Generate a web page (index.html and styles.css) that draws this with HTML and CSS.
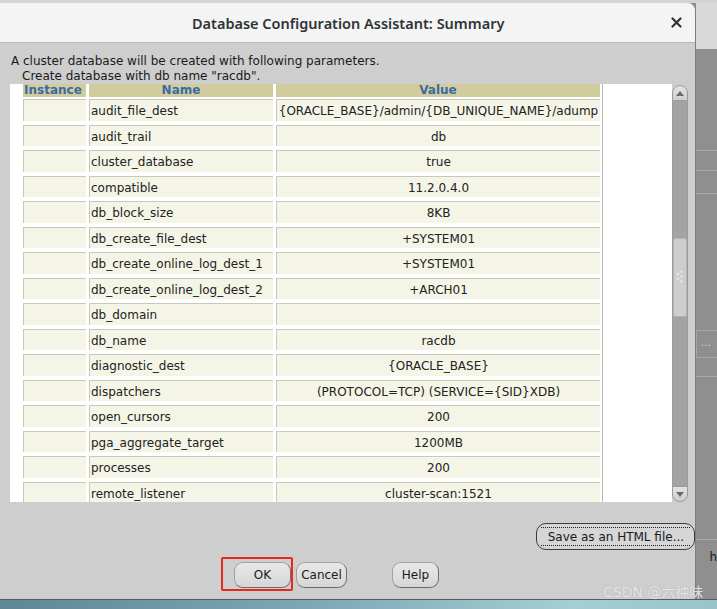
FILE: index.html
```html
<!DOCTYPE html>
<html>
<head>
<meta charset="utf-8">
<link rel="stylesheet" href="styles.css">
</head>
<body>
<div class="screen">
  <div class="topstrip"></div>
  <div class="main">
    <div class="dialog">
      <div class="titlebar">
        <span class="title">Database Configuration Assistant: Summary</span>
        <svg class="close" width="11" height="11" viewBox="0 0 11 11"><path d="M1.5 1.5 L9.5 9.5 M9.5 1.5 L1.5 9.5" stroke="#2e3436" stroke-width="2.2" stroke-linecap="round"/></svg>
      </div>
      <div class="content">
        <p class="msg">A cluster database will be created with following parameters.</p>
        <p class="msg indent">Create database with db name "racdb".</p>
        <div class="panel">
          <div class="tablearea">
            <div class="gridwrap">
              <div class="grid head">
                <div class="hcell left">Instance</div>
                <div class="hcell">Name</div>
                <div class="hcell">Value</div>
              </div>
              <div class="grid rows">
                <div class="cell"></div><div class="cell name">audit_file_dest</div><div class="cell val">{ORACLE_BASE}/admin/{DB_UNIQUE_NAME}/adump</div>
                <div class="cell"></div><div class="cell name">audit_trail</div><div class="cell val">db</div>
                <div class="cell"></div><div class="cell name">cluster_database</div><div class="cell val">true</div>
                <div class="cell"></div><div class="cell name">compatible</div><div class="cell val">11.2.0.4.0</div>
                <div class="cell"></div><div class="cell name">db_block_size</div><div class="cell val">8KB</div>
                <div class="cell"></div><div class="cell name">db_create_file_dest</div><div class="cell val">+SYSTEM01</div>
                <div class="cell"></div><div class="cell name">db_create_online_log_dest_1</div><div class="cell val">+SYSTEM01</div>
                <div class="cell"></div><div class="cell name">db_create_online_log_dest_2</div><div class="cell val">+ARCH01</div>
                <div class="cell"></div><div class="cell name">db_domain</div><div class="cell val"></div>
                <div class="cell"></div><div class="cell name">db_name</div><div class="cell val">racdb</div>
                <div class="cell"></div><div class="cell name">diagnostic_dest</div><div class="cell val">{ORACLE_BASE}</div>
                <div class="cell"></div><div class="cell name">dispatchers</div><div class="cell val">(PROTOCOL=TCP) (SERVICE={SID}XDB)</div>
                <div class="cell"></div><div class="cell name">open_cursors</div><div class="cell val">200</div>
                <div class="cell"></div><div class="cell name">pga_aggregate_target</div><div class="cell val">1200MB</div>
                <div class="cell"></div><div class="cell name">processes</div><div class="cell val">200</div>
                <div class="cell"></div><div class="cell name">remote_listener</div><div class="cell val">cluster-scan:1521</div>
              </div>
            </div>
          </div>
          <div class="scrollbar">
            <div class="sbtn up"><svg width="8" height="5" viewBox="0 0 8 5"><path d="M0 5 L4 0 L8 5 Z" fill="#6a6a6a"/></svg></div>
            <div class="track">
              <div class="thumb">
                <svg width="8" height="16" viewBox="0 0 8 16"><g fill="#f4f4f4"><circle cx="5.5" cy="1.5" r="0.9"/><circle cx="2" cy="4" r="0.9"/><circle cx="5.5" cy="6.5" r="0.9"/><circle cx="2" cy="9" r="0.9"/><circle cx="5.5" cy="11.5" r="0.9"/></g></svg>
              </div>
            </div>
            <div class="sbtn down"><svg width="8" height="5" viewBox="0 0 8 5"><path d="M0 0 L4 5 L8 0 Z" fill="#6a6a6a"/></svg></div>
          </div>
        </div>
        <div class="saverow">
          <div class="savebtn"><span class="focus">Save as an HTML file...</span></div>
        </div>
        <div class="buttonrow">
          <div class="mark"><div class="btn ok">OK</div></div>
          <div class="btn cancel">Cancel</div>
          <div class="btn help">Help</div>
        </div>
      </div>
    </div>
    <div class="side">
      <div class="side-top"></div>
      <div class="side-body">
        <div class="sline s1"></div>
        <div class="sline s2"></div>
        <div class="sline s3"></div>
        <div class="sbox">...</div>
        <div class="sline s4"></div>
        <div class="sline s5"></div>
        <div class="sh">h</div>
      </div>
    </div>
  </div>
  <div class="taskbar"></div>
  <div class="watermark">CSDN @六种味</div>
</div>
</body>
</html>
```
FILE: styles.css
```css
html, body {
  margin: 0;
  padding: 0;
}
body {
  width: 717px;
  height: 609px;
  overflow: hidden;
  font-family: "DejaVu Sans", sans-serif;
  background: #cecece;
}
.screen {
  position: relative;
  width: 717px;
  height: 609px;
  display: flex;
  flex-direction: column;
  background: #8e8e8e;
}
.topstrip {
  height: 3px;
  background: #d4d4d4;
}
.main {
  display: flex;
  height: 597px;
}
.dialog {
  width: 697px;
  border-right: 1px solid #7d7d7d;
  display: flex;
  flex-direction: column;
  background: #cecece;
  border-top-right-radius: 8px;
}
.titlebar {
  height: 39px;
  border-bottom: 1px solid #b9b9b9;
  background: #f4f4f4;
  border-top-right-radius: 8px;
  display: flex;
  align-items: center;
  justify-content: center;
  position: relative;
}
.title {
  font-family: "Noto Sans", sans-serif;
  font-size: 14.5px;
  font-weight: 600;
  color: #2e3436;
  padding-left: 1px;
}
.close {
  position: absolute;
  right: 13px;
  top: 14px;
}
.content {
  flex: 1;
  display: flex;
  flex-direction: column;
  padding-top: 11px;
}
.msg {
  margin: 0;
  font-size: 12px;
  line-height: 15px;
  color: #1a1a1a;
  padding-left: 11px;
  white-space: nowrap;
}
.msg.indent {
  padding-left: 22px;
}
.panel {
  display: flex;
  height: 418px;
  margin-left: 10px;
}
.tablearea {
  width: 649px;
  padding-left: 13px;
  background: #ffffff;
  overflow: hidden;
}
.gridwrap {
  width: 577px;
  height: 100%;
  padding-right: 2px;
  border-right: 1px solid #b9b9b9;
}
.grid {
  display: grid;
  grid-template-columns: 63px 184px 324px;
  column-gap: 3px;
}
.grid.head {
  height: 13px;
  margin-bottom: 2px;
}
.hcell {
  background: #d0cc9e;
  height: 13px;
  display: flex;
  align-items: center;
  justify-content: center;
  font-size: 12px;
  font-weight: bold;
  line-height: 13px;
  color: #3a6aa3;
}
.hcell.left {
  justify-content: flex-start;
  padding-left: 1px;
}
.grid.rows {
  grid-auto-rows: 21.5px;
  row-gap: 4px;
}
.cell {
  background: #f5f5e7;
  border-top: 1px solid #c9c9bb;
  border-left: 1px solid #c9c9bb;
  font-size: 12px;
  color: #222222;
  display: flex;
  align-items: center;
  white-space: nowrap;
  padding-top: 2px;
}
.cell.name {
  padding-left: 1px;
}
.cell.val {
  justify-content: center;
}
.scrollbar {
  width: 16px;
  display: flex;
  flex-direction: column;
  height: 417px;
  margin-top: 1px;
}
.sbtn {
  height: 16px;
  background: linear-gradient(#e4e4e4, #cfcfcf);
  border: 1px solid #9a9a9a;
  box-sizing: border-box;
  display: flex;
  align-items: center;
  justify-content: center;
}
.sbtn.up {
  border-radius: 8px 8px 0 0;
}
.sbtn.down {
  border-radius: 0 0 8px 8px;
}
.track {
  flex: 1;
  background: #a3a3a3;
  border-left: 1px solid #9a9a9a;
  border-right: 1px solid #9a9a9a;
}
.thumb {
  margin-top: 137px;
  height: 79px;
  background: #cdcdcd;
  border: 1px solid #b4b4b4;
  box-sizing: border-box;
  border-radius: 2px;
  display: flex;
  align-items: center;
  justify-content: center;
}
.saverow {
  display: flex;
  justify-content: flex-end;
  margin-top: 21px;
}
.savebtn {
  width: 159px;
  height: 27px;
  box-sizing: border-box;
  border: 1px solid #3c3c3c;
  border-radius: 10px;
  background: #d6d6d6;
  padding: 3px 4px;
  display: flex;
}
.focus {
  flex: 1;
  border-top: 1px dotted #222;
  border-bottom: 1px dotted #222;
  font-size: 12px;
  color: #1a1a1a;
  display: flex;
  align-items: center;
  justify-content: center;
  white-space: nowrap;
}
.buttonrow {
  display: flex;
  align-items: flex-start;
  margin-top: 7px;
  padding-left: 221px;
}
.mark {
  border: 2px solid #e8281f;
  border-radius: 2px;
  padding: 3px 0 1px 11px;
  display: flex;
}
.btn {
  height: 26px;
  box-sizing: border-box;
  border: 1px solid #a0a0a0;
  border-right-color: #707070;
  border-bottom-color: #6a6a6a;
  border-radius: 9px;
  background: linear-gradient(#e8e8e8, #d6d6d6);
  font-size: 12px;
  color: #1a1a1a;
  display: flex;
  align-items: center;
  justify-content: center;
}
.btn.ok {
  width: 57px;
}
.btn.cancel {
  width: 51px;
  margin-left: 3px;
  margin-top: 5px;
}
.btn.help {
  width: 47px;
  margin-left: 45px;
  margin-top: 5px;
}
.side {
  flex: 1;
  display: flex;
  flex-direction: column;
}
.side-top {
  height: 46px;
  background: #d9d9d9;
}
.side-body {
  flex: 1;
  background: #8f8f8f;
  display: flex;
  flex-direction: column;
}
.sline {
  height: 1px;
  background: #a9a9a9;
}
.s1 { margin-top: 101px; }
.s2 { margin-top: 19px; }
.s3 { margin-top: 22px; }
.sbox {
  margin-top: 136px;
  height: 26px;
  border: 1px solid #a6a6a6;
  border-right: none;
  font-size: 11px;
  color: #cfcfcf;
  line-height: 24px;
  padding-left: 3px;
}
.s4 { margin-top: 18px; }
.s5 { margin-top: 162px; }
.sh {
  margin-top: 10px;
  font-size: 12px;
  color: #1a1a1a;
  padding-left: 13px;
}
.taskbar {
  height: 9px;
  border-top: 1px solid #4e5e66;
  background: linear-gradient(90deg, #5f8796 0%, #7fa9b6 45%, #a5ced4 80%, #9bc3ca 100%);
}
.watermark {
  position: absolute;
  left: 603px;
  top: 581px;
  font-family: "DejaVu Sans", "Noto Sans CJK SC", sans-serif;
  font-size: 14px;
  color: rgba(255, 255, 255, 0.75);
  text-shadow: 0 0 1px rgba(120, 120, 120, 0.6);
  white-space: nowrap;
}
```
